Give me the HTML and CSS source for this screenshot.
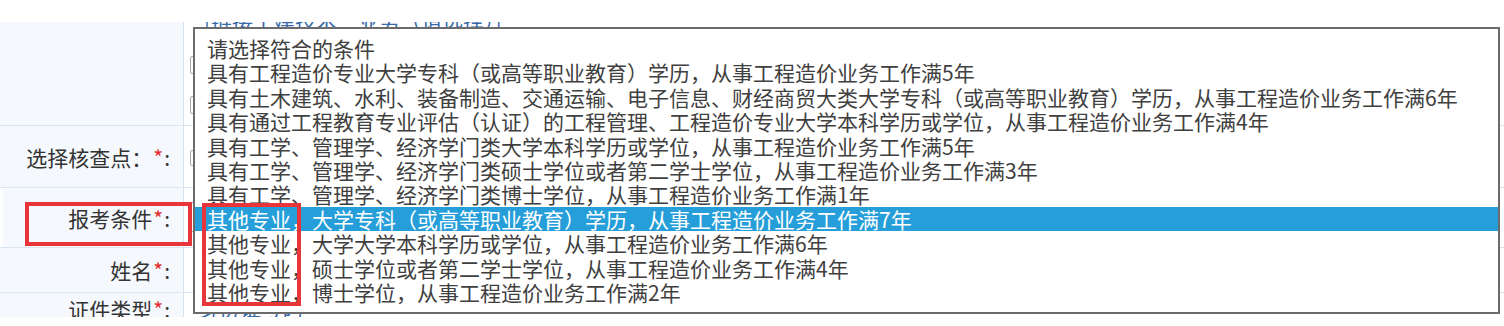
FILE: index.html
```html
<!DOCTYPE html>
<html lang="zh">
<head>
<meta charset="utf-8">
<link rel="stylesheet" href="styles.css">
</head>
<body>
<div class="page">
  <div class="form">
    <div class="row r1">
      <div class="lab"></div>
      <div class="val">
        <div class="cut-link">[链接土建技术一业务（请选择）]</div>
        <div class="box b2"></div>
        <div class="box b3"></div>
      </div>
    </div>
    <div class="row r2">
      <div class="lab">选择核查点：<span class="req">*</span>:</div>
      <div class="val"><div class="box b4"></div></div>
    </div>
    <div class="row r3">
      <div class="lab lab-framed">报考条件 <span class="req">*</span>:</div>
      <div class="val"><div class="box b5"></div></div>
    </div>
    <div class="row r4">
      <div class="lab">姓名<span class="req">*</span>:</div>
      <div class="val"></div>
    </div>
    <div class="row r5">
      <div class="lab">证件类型<span class="req">*</span>:</div>
      <div class="val"><span class="cut-link2">身份证号码</span></div>
    </div>

    <div class="listbox">
      <div class="opt">请选择符合的条件</div>
      <div class="opt">具有工程造价专业大学专科（或高等职业教育）学历，从事工程造价业务工作满5年</div>
      <div class="opt">具有土木建筑、水利、装备制造、交通运输、电子信息、财经商贸大类大学专科（或高等职业教育）学历，从事工程造价业务工作满6年</div>
      <div class="opt">具有通过工程教育专业评估（认证）的工程管理、工程造价专业大学本科学历或学位，从事工程造价业务工作满4年</div>
      <div class="opt">具有工学、管理学、经济学门类大学本科学历或学位，从事工程造价业务工作满5年</div>
      <div class="opt">具有工学、管理学、经济学门类硕士学位或者第二学士学位，从事工程造价业务工作满3年</div>
      <div class="opt">具有工学、管理学、经济学门类博士学位，从事工程造价业务工作满1年</div>
      <div class="opt sel">其他专业，大学专科（或高等职业教育）学历，从事工程造价业务工作满7年</div>
      <div class="opt">其他专业，大学大学本科学历或学位，从事工程造价业务工作满6年</div>
      <div class="opt">其他专业，硕士学位或者第二学士学位，从事工程造价业务工作满4年</div>
      <div class="opt">其他专业，博士学位，从事工程造价业务工作满2年</div>
    </div>

    <div class="mark mark-label"></div>
    <div class="mark mark-opts"></div>
  </div>
</div>
</body>
</html>
```

FILE: styles.css
```css
html, body {
  margin: 0;
  padding: 0;
  background: #ffffff;
}
body {
  font-family: "Microsoft YaHei", "Noto Sans CJK SC", "Noto Sans", sans-serif;
  color: #333333;
}
.page {
  padding-top: 22px;
  height: 304px;
}
.form {
  position: relative;
  height: 295px;
  overflow: hidden;
  display: flex;
  flex-direction: column;
}
.row {
  display: grid;
  grid-template-columns: 184px 1fr;
  border-bottom: 1px solid #d9e6f2;
  flex: none;
}
.r1 { height: 103px; }
.r2 { height: 61px; }
.r3 { height: 59px; }
.r4 { height: 44px; }
.r5 { height: 40px; border-bottom: none; }
.lab {
  background: #f5f8fc;
  border-right: 1px solid #d4e2ef;
  padding-right: 13px;
  font-size: 21px;
  color: #333333;
  display: flex;
  align-items: center;
  justify-content: flex-end;
  white-space: nowrap;
}
.lab-framed {
  box-shadow: inset 6px 0 0 -3px #ffffff;
}
.r5 .lab {
  align-items: flex-start;
  padding-top: 1px;
}
.req {
  color: #e32b2b;
  margin: 0 1px;
}
.val {
  position: relative;
  padding-left: 6px;
  display: flex;
  flex-direction: column;
}
.cut-link {
  font-size: 21px;
  line-height: 24px;
  color: #3869a8;
  margin-top: -14px;
  padding-left: 14px;
  white-space: nowrap;
}
.cut-link2 {
  font-size: 21px;
  line-height: 24px;
  color: #3869a8;
  margin-top: 2px;
  padding-left: 8px;
  white-space: nowrap;
}
.box {
  border: 1px solid #a8a8a8;
  border-radius: 2px;
  width: 600px;
  background: #fff;
}
.b2 { height: 16px; margin-top: 24px; }
.b3 { height: 16px; margin-top: 22px; }
.b4 { height: 14px; margin-top: 24px; }
.b5 { height: 28px; margin-top: 14px; }

.listbox {
  position: absolute;
  left: 193px;
  top: 5px;
  width: 1303px;
  height: 276px;
  border: 2px solid #6b6b6b;
  background: #ffffff;
  padding-top: 7px;
  z-index: 5;
}
.opt {
  height: 24.4px;
  line-height: 24.4px;
  font-size: 21px;
  color: #404040;
  padding-left: 12px;
  white-space: nowrap;
}
.opt.sel {
  background: #269ed9;
  color: #ffffff;
}
.mark {
  position: absolute;
  border: 4px solid #e8353a;
  z-index: 10;
  box-sizing: border-box;
}
.mark-label {
  left: 25px;
  top: 180px;
  width: 167px;
  height: 44px;
}
.mark-opts {
  left: 202px;
  top: 181px;
  width: 99px;
  height: 103px;
}
```
